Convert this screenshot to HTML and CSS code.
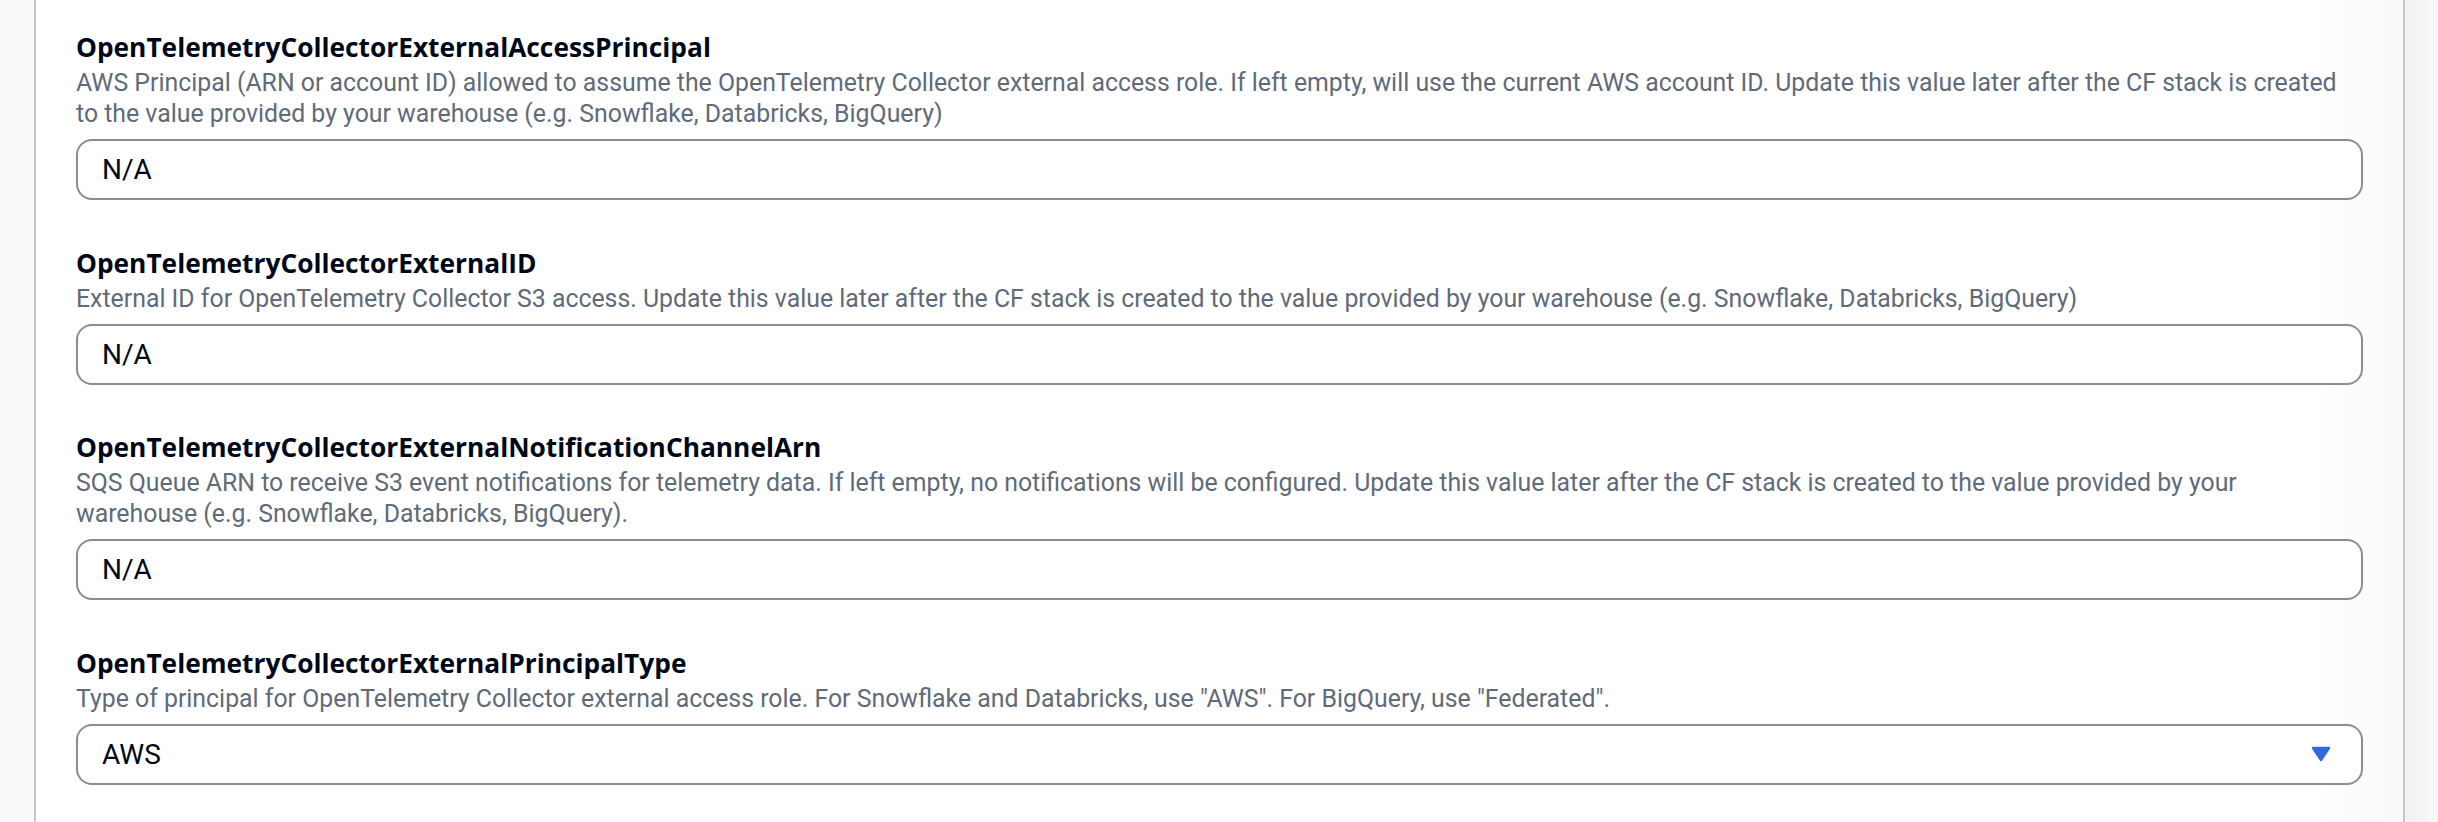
FILE: index.html
```html
<!DOCTYPE html>
<html lang="en">
<head>
<meta charset="utf-8">
<title>Parameters</title>
<link rel="stylesheet" href="styles.css">
</head>
<body>
<div class="page">
  <div class="panel">
    <div class="field">
      <div class="label">OpenTelemetryCollectorExternalAccessPrincipal</div>
      <div class="desc">AWS Principal (ARN or account ID) allowed to assume the OpenTelemetry Collector external access role. If left empty, will use the current AWS account ID. Update this value later after the CF stack is created to the value provided by your warehouse (e.g. Snowflake, Databricks, BigQuery)</div>
      <div class="input">N/A</div>
    </div>
    <div class="field">
      <div class="label">OpenTelemetryCollectorExternalID</div>
      <div class="desc">External ID for OpenTelemetry Collector S3 access. Update this value later after the CF stack is created to the value provided by your warehouse (e.g. Snowflake, Databricks, BigQuery)</div>
      <div class="input">N/A</div>
    </div>
    <div class="field">
      <div class="label">OpenTelemetryCollectorExternalNotificationChannelArn</div>
      <div class="desc">SQS Queue ARN to receive S3 event notifications for telemetry data. If left empty, no notifications will be configured. Update this value later after the CF stack is created to the value provided by your warehouse (e.g. Snowflake, Databricks, BigQuery).</div>
      <div class="input">N/A</div>
    </div>
    <div class="field">
      <div class="label">OpenTelemetryCollectorExternalPrincipalType</div>
      <div class="desc">Type of principal for OpenTelemetry Collector external access role. For Snowflake and Databricks, use "AWS". For BigQuery, use "Federated".</div>
      <div class="input select">
        <span>AWS</span>
        <svg class="caret" width="32" height="32" viewBox="0 0 16 16" aria-hidden="true">
          <path d="M4 5h8l-4 6-4-6z" fill="#2f6bdd" stroke="#2f6bdd" stroke-width="1.2" stroke-linejoin="round"/>
        </svg>
      </div>
    </div>
  </div>
</div>
</body>
</html>
```

FILE: styles.css
```css
html, body {
  margin: 0;
  padding: 0;
}

body {
  background: #f9f9f9;
  font-family: "Roboto", "Open Sans", sans-serif;
  -webkit-font-smoothing: antialiased;
}

.page {
  display: flex;
  height: 822px;
  overflow: hidden;
  padding: 0 33px 0 34px;
  background: linear-gradient(to right, #f9f9f9 0, #f9f9f9 2405px, #f1f1f1 2406px, #f8f8f8 2438px);
}

.panel {
  flex: 1;
  background: linear-gradient(to right, #ffffff 0, #ffffff 96%, #f9f9f9 100%);
  border-left: 2px solid #c6c6cd;
  border-right: 2px solid #c6c6cd;
  padding: 33px 40px 0 40px;
  display: flex;
  flex-direction: column;
  gap: 48.5px;
}

.field {
  display: flex;
  flex-direction: column;
}

.label {
  font-family: "Open Sans", "Roboto", sans-serif;
  font-size: 26.3px;
  line-height: 28px;
  font-weight: 700;
  color: #000716;
  margin-bottom: 6px;
}

.desc {
  font-size: 24.85px;
  line-height: 31px;
  color: #5f6b7a;
  margin-bottom: 10px;
}

.input {
  height: 61px;
  box-sizing: border-box;
  border: 2px solid #8c8c94;
  border-radius: 16px;
  background: #fff;
  padding: 0 24px;
  display: flex;
  align-items: center;
  font-size: 28px;
  color: #000716;
}

.select {
  justify-content: space-between;
  padding-right: 24px;
}

.caret {
  display: block;
}
```
